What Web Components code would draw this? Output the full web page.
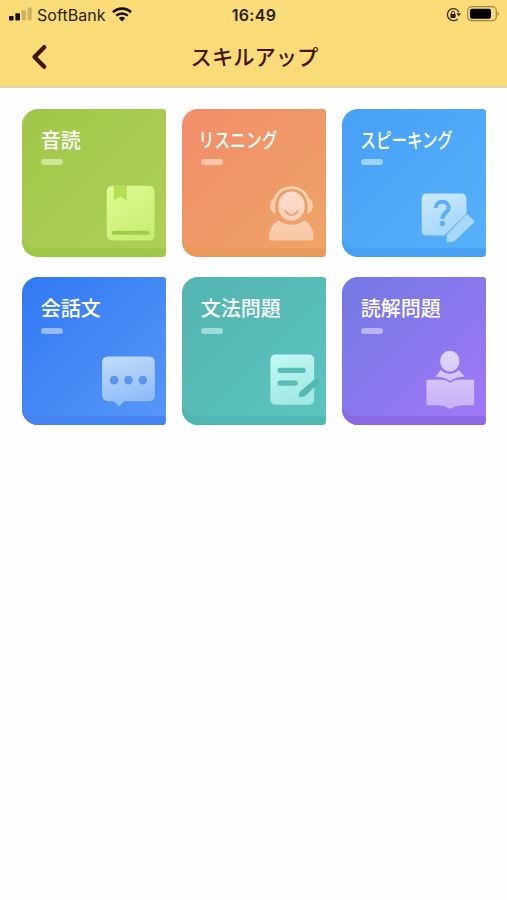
<!DOCTYPE html>
<html lang="ja">
<head>
<meta charset="utf-8">
<title>スキルアップ</title>
<style>
html,body{margin:0;background:#fefefe}
body{font-family:"Noto Sans CJK JP",sans-serif}
</style>
</head>
<body>
<skill-app></skill-app>
<script>
const define = (name, html) => customElements.define(name, class extends HTMLElement {
  constructor() {
    super();
    this.attachShadow({ mode: "open" }).innerHTML = html;
  }
});

define("status-bar", `
<style>
:host{display:grid;grid-template-columns:1fr auto 1fr;align-items:center;height:29px;padding:0 8px 0 9px;box-sizing:border-box;font-family:Inter,"Liberation Sans",sans-serif;color:#2a2312}
.left,.right{display:flex;align-items:center}
.right{justify-content:flex-end;gap:6px}
svg{display:block;flex:none}
.left svg,.right svg{margin-bottom:1px}
.carrier{font-size:16px;letter-spacing:.05px;margin:0 6px 0 5px;line-height:20px}
.time{font-size:16px;font-weight:600;letter-spacing:.35px;line-height:20px}
</style>
<div class="left">
<svg width="23" height="14" viewBox="0 0 23 14"><g fill="#151008"><rect x="0" y="9" width="4.6" height="4.6" rx="1"/><rect x="6.4" y="6.3" width="4.6" height="7.3" rx="1"/></g><g fill="#cdb460"><rect x="12.6" y="3.2" width="4.4" height="10.4" rx="1"/><rect x="18.6" y="0.5" width="4.2" height="13.1" rx="1"/></g></svg>
<span class="carrier">SoftBank</span>
<svg width="20" height="15" viewBox="0 0 20 15" fill="none" stroke="#17120a"><path d="M1 5.2a13 13 0 0 1 18 0" stroke-width="2.6"/><path d="M4.2 8.7a8.4 8.4 0 0 1 11.6 0" stroke-width="2.5"/><path d="M10 14.6 6.8 11.3a4.7 4.7 0 0 1 6.4 0Z" fill="#17120a" stroke="none"/></svg>
</div>
<div class="time">16:49</div>
<div class="right">
<svg width="15" height="15" viewBox="0 0 15 15"><path d="M12.9 5.2A6 6 0 1 0 11.6 11.9" fill="none" stroke="#3d3317" stroke-width="1.4"/><path d="M10.4 6.2h4.6l-2.2 3.4z" fill="#3d3317"/><rect x="4.4" y="6.9" width="5.2" height="4" rx=".6" fill="#251c0c"/><path d="M5.5 7.2V5.8a1.5 1.5 0 0 1 3 0v1.4" fill="none" stroke="#251c0c" stroke-width="1"/></svg>
<svg width="32" height="16" viewBox="0 0 32 16"><rect x=".7" y=".7" width="28.6" height="14" rx="4" fill="none" stroke="#9d8847" stroke-width="1.2"/><rect x="3" y="2.7" width="21" height="10" rx="2" fill="#050402"/><path d="M30.5 5.5q1.4.7 1.4 2.2t-1.4 2.2z" fill="#9d8847"/></svg>
</div>`);

define("title-bar", `
<style>
:host{display:grid;grid-template-columns:60px 1fr 60px;align-items:start;height:57px;color:#43160c}
svg{display:block;margin:15px 0 0 31px}
h1{margin:12px 0 0;text-align:center;font-size:21.3px;line-height:30px;font-weight:500;padding-left:2px}
</style>
<svg width="17" height="26" viewBox="0 0 17 26"><path d="M13.2 3.2 3.5 13l9.7 9.8" fill="none" stroke="#43160c" stroke-width="4.4" stroke-linecap="round" stroke-linejoin="round"/></svg>
<h1><slot></slot></h1>`);

customElements.define("skill-card", class extends HTMLElement {
  constructor() {
    super();
    this.attachShadow({ mode: "open" }).innerHTML = `
<style>
:host{display:grid;height:148px;border-radius:16px 3px 4px 16px;overflow:hidden;background:linear-gradient(135deg,var(--from),var(--to))}
.edge,.art,.copy{grid-area:1/1}
.edge,.art{width:100%;height:100%;display:block}
.copy{padding:16px 0 0 18.5px;color:#fff}
h2{margin:0;font-size:20px;line-height:29px;font-weight:500;white-space:nowrap;width:max-content;transform-origin:0 50%}
i{display:block;width:22px;height:6px;border-radius:3px;margin-top:5.5px;background:var(--bar)}
</style>
<svg class="edge" viewBox="25 25 430 445" preserveAspectRatio="none"><path d="M25 410Q35 442 70 442H455V470H25Z" fill="var(--edge)"/></svg>
<div class="copy"><h2><slot></slot></h2><i></i></div>
<div class="art"><slot name="icon"></slot></div>`;
  }
  connectedCallback() {
    const h = this.shadowRoot.querySelector("h2");
    const w = Number(this.getAttribute("label-width"));
    if (w) h.style.transform = "translateX(" + (this.getAttribute("shift") || 0) + "px) scaleX(" + w / h.offsetWidth + ")";
  }
});

const art = {
  book: `<defs><linearGradient id="g" x2=".5" y2="1"><stop stop-color="#e2fb94"/><stop offset="1" stop-color="#c9ee74"/></linearGradient></defs>
<rect x="279" y="255" width="143" height="164" rx="16" fill="url(#g)"/><path d="M300 255h39v44l-19-12-20 12z" fill="#b2e053"/><rect x="295" y="390" width="112" height="12" rx="5" fill="#a3cc4e"/>`,
  listen: `<defs><linearGradient id="g" gradientUnits="userSpaceOnUse" x1="0" y1="255" x2="0" y2="420"><stop stop-color="#fde0d5"/><stop offset="1" stop-color="#f8c6a4"/></linearGradient></defs>
<g fill="#fad0a8"><path d="M303 305C304 278 325 261 353 261s49 17 50 44" fill="none" stroke="#fbd5b8" stroke-width="8"/><path d="M309 290Q289 293 289 314t18 24q-6-24 2-48zM397 290q20 3 20 24t-18 24q6-24-2-48z"/></g><ellipse cx="353" cy="316" rx="40" ry="44" fill="url(#g)"/><path d="M334 330q19 27 38 0" fill="none" stroke="#efa073" stroke-width="5" stroke-linecap="round"/><path d="M313 359q40 25 80 0 26 14 27 53 0 7-8 7H293q-8 0-8-7 2-39 28-53z" fill="url(#g)"/>`,
  speak: `<defs><linearGradient id="g" x2=".4" y2="1"><stop stop-color="#cce9fd"/><stop offset="1" stop-color="#a6d8fc"/></linearGradient></defs>
<path d="M280 278h101q17 0 17 17v43l-66 66h-52q-16 0-16-16v-94q0-16 16-16z" fill="url(#g)"/><path d="M306 322C306 297 345 297 345 321C345 336 326 335 326 354" fill="none" stroke="#58aff8" stroke-width="12"/><circle cx="326" cy="368" r="8" fill="#58aff8"/><path d="m403 343 17 16q3 3 0 6l-59 57-19 2q-4 0-4-5l2-18 56-58q4-4 7 0z" fill="#a8d9fc"/>`,
  chat: `<defs><linearGradient id="g" x2=".3" y2="1"><stop stop-color="#c4dcfb"/><stop offset="1" stop-color="#90bdf8"/></linearGradient></defs>
<path d="M284 263h120q19 0 19 19v96q0 19-19 19h-73l-15 16-16-16h-16q-19 0-19-19v-96q0-19 19-19z" fill="url(#g)"/><g fill="#5b94f0"><circle cx="301" cy="334" r="13"/><circle cx="344" cy="334" r="13"/><circle cx="387" cy="334" r="13"/></g>`,
  note: `<defs><linearGradient id="g" x2=".3" y2="1"><stop stop-color="#c5f8f4"/><stop offset="1" stop-color="#a1e9e3"/></linearGradient></defs>
<rect x="290" y="257" width="131" height="151" rx="15" fill="url(#g)"/><g stroke="#5abdb6" stroke-width="16" stroke-linecap="round"><path d="M319 305h69M319 343h45"/></g><path d="M424 330q5-5 10 0 6 6 1 11l-38 38q-4 4-10 5-12 2-12-4 0-8 5-13z" fill="#54b7b3"/>`,
  read: `<defs><linearGradient id="g" gradientUnits="userSpaceOnUse" x1="0" y1="247" x2="0" y2="420"><stop stop-color="#e0d7fc"/><stop offset="1" stop-color="#c7b0f8"/></linearGradient></defs>
<g fill="url(#g)"><ellipse cx="348" cy="277" rx="29" ry="31"/><path d="M321 304q27 23 54 0l18 20q-28 0-44 13-16-13-44-13z"/><path d="M278 333h46q14 0 25 10 12-10 27-10h45v76h-37q-18 1-35 11-17-10-34-11h-37z"/></g>`
};

customElements.define("skill-icon", class extends HTMLElement {
  constructor() {
    super();
    this.attachShadow({ mode: "open" }).innerHTML = `<style>:host{display:block;height:100%}svg{display:block;width:100%;height:100%}</style><svg viewBox="25 25 430 445" preserveAspectRatio="none">${art[this.getAttribute("kind")]}</svg>`;
  }
});

define("skill-app", `
<style>
:host{display:block;min-height:900px;background:#fefefe}
header{background:#f9dc78;border-bottom:2px solid #ddd2ac}
main{display:grid;grid-template-columns:repeat(3,143.5px);column-gap:16.5px;row-gap:20.5px;padding:20.6px 0 0 22.3px}
</style>
<header><status-bar></status-bar><title-bar>スキルアップ</title-bar></header>
<main>
<skill-card style="--from:#a0c74a;--to:#add057;--edge:#9fc849;--bar:#cfe59a">音読<skill-icon slot="icon" kind="book"></skill-icon></skill-card>
<skill-card label-width="79" shift="-2.5" style="--from:#f28d69;--to:#eea567;--edge:#e9995a;--bar:#fac6ae">リスニング<skill-icon slot="icon" kind="listen"></skill-icon></skill-card>
<skill-card label-width="92" shift="-.5" style="--from:#489ff7;--to:#57b1f9;--edge:#48a0f4;--bar:#9fd1fc">スピーキング<skill-icon slot="icon" kind="speak"></skill-icon></skill-card>
<skill-card style="--from:#3278f4;--to:#5798f7;--edge:#4584f0;--bar:#94bafb">会話文<skill-icon slot="icon" kind="chat"></skill-icon></skill-card>
<skill-card style="--from:#53b4b1;--to:#5cc5bf;--edge:#50b6b1;--bar:#9cdcda">文法問題<skill-icon slot="icon" kind="note"></skill-icon></skill-card>
<skill-card style="--from:#7279e4;--to:#a277f7;--edge:#8b69e4;--bar:#b9b5f5">読解問題<skill-icon slot="icon" kind="read"></skill-icon></skill-card>
</main>`);
</script>
</body>
</html>
